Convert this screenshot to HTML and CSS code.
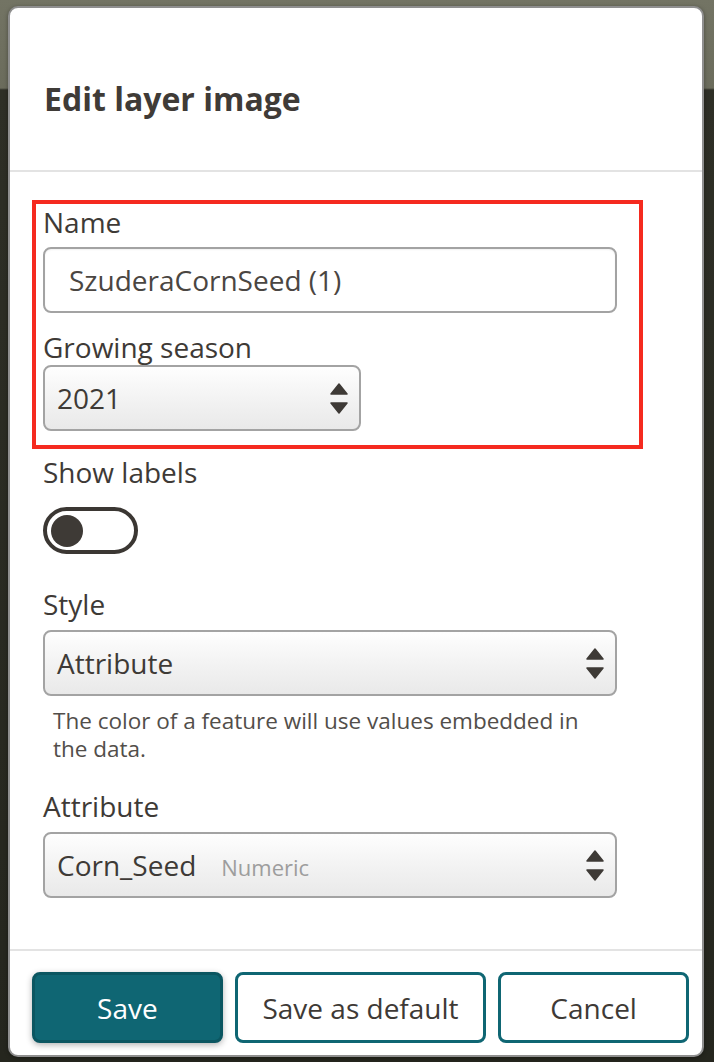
FILE: index.html
```html
<!DOCTYPE html>
<html lang="en">
<head>
<meta charset="utf-8">
<title>Edit layer image</title>
<link rel="stylesheet" href="styles.css">
</head>
<body>
<div class="backdrop">
  <div class="modal">
    <div class="modal-header">
      <h1 class="title">Edit layer image</h1>
    </div>
    <div class="modal-body">
      <div class="highlight">
        <label class="label">Name</label>
        <div class="text-input gap-sm">SzuderaCornSeed (1)</div>
        <label class="label gap-md">Growing season</label>
        <div class="select">
          <span class="select-value">2021</span>
          <svg class="arrows" width="18" height="31" viewBox="0 0 18 31"><polygon points="9,1 17,11 1,11"/><polygon points="1,20 17,20 9,30"/></svg>
        </div>
      </div>
      <label class="label gap-xs">Show labels</label>
      <div class="toggle"><span class="knob"></span></div>
      <label class="label gap-lg">Style</label>
      <div class="select gap-sm2">
        <span class="select-value">Attribute</span>
        <svg class="arrows" width="18" height="31" viewBox="0 0 18 31"><polygon points="9,1 17,11 1,11"/><polygon points="1,20 17,20 9,30"/></svg>
      </div>
      <p class="help">The color of a feature will use values embedded in the data.</p>
      <label class="label gap-help">Attribute</label>
      <div class="select gap-sm2">
        <span class="select-value">Corn_Seed<span class="type">Numeric</span></span>
        <svg class="arrows" width="18" height="31" viewBox="0 0 18 31"><polygon points="9,1 17,11 1,11"/><polygon points="1,20 17,20 9,30"/></svg>
      </div>
    </div>
    <div class="modal-footer">
      <button class="btn btn-primary">Save</button>
      <button class="btn btn-wide">Save as default</button>
      <button class="btn">Cancel</button>
    </div>
  </div>
</div>
</body>
</html>
```
FILE: styles.css
```css
* { box-sizing: border-box; }
html, body { margin: 0; padding: 0; }
body {
  width: 714px;
  height: 1062px;
  overflow: hidden;
  font-family: "Open Sans", "Noto Sans", sans-serif;
  color: #3e3a36;
  background: linear-gradient(to bottom, #737464 0, #6b6c5c 88px, #2e2f26 90px, #25261e 100%);
}
.backdrop {
  padding: 6px 10px 5px 8px;
}
.modal {
  width: 696px;
  height: 1051px;
  background: #fff;
  border: 2px solid #8f8f8f;
  border-radius: 10px;
  box-shadow: 0 1px 4px rgba(0,0,0,0.35);
  display: flex;
  flex-direction: column;
}
.modal-header {
  padding: 71px 20px 51px 34px;
  border-bottom: 2px solid #e3e3e3;
}
.title {
  margin: 0;
  font-size: 32px;
  line-height: 40px;
  font-weight: 700;
  color: #3f3b37;
}
.modal-body {
  padding: 28px 85px 50px 33px;
  display: flex;
  flex-direction: column;
  flex: 1;
}
.highlight {
  border: 4px solid #f52a1f;
  margin: 0 -26px 0 -11px;
  padding: 0 22px 14px 7px;
  display: flex;
  flex-direction: column;
}
.label {
  display: block;
  font-size: 28px;
  line-height: 36px;
  color: #3e3a36;
}
.gap-xs { margin-top: 5px; }
.gap-sm { margin-top: 7px; }
.gap-sm2 { margin-top: 8px; }
.gap-md { margin-top: 16px; }
.gap-lg { margin-top: 32px; }
.gap-help { margin-top: 25px; }
.text-input {
  height: 66px;
  border: 2px solid #a3a3a3;
  border-radius: 8px;
  background: #fff;
  padding: 0 22px 0 24px;
  display: flex;
  align-items: center;
  font-size: 28px;
  color: #4a4642;
  box-shadow: inset 0 1px 2px rgba(0,0,0,0.06);
}
.select {
  height: 66px;
  border: 2px solid #a3a3a3;
  border-radius: 8px;
  background: linear-gradient(to bottom, #fefefe 0%, #f3f3f3 50%, #e9e9e9 100%);
  padding: 0 11px 0 12px;
  display: flex;
  align-items: center;
  justify-content: space-between;
  font-size: 28px;
  color: #3e3a36;
}
.highlight .select { width: 318px; }
.select-value { display: flex; align-items: baseline; }
.type {
  font-size: 22px;
  color: #9d9d9d;
  margin-left: 25px;
}
.arrows { fill: #3e3a36; stroke: #3e3a36; stroke-width: 1.5; stroke-linejoin: round; flex: none; }
.toggle {
  margin-top: 17px;
  width: 95px;
  height: 47px;
  border: 4px solid #3b3733;
  border-radius: 24px;
  padding: 0 4px;
  display: flex;
  align-items: center;
}
.knob {
  width: 32px;
  height: 32px;
  border-radius: 50%;
  background: #3e3a36;
}
.help {
  margin: 11px 0 0;
  padding: 0 20px 0 10px;
  font-size: 22.5px;
  line-height: 28px;
  color: #524e4a;
}
.modal-footer {
  border-top: 2px solid #e3e3e3;
  padding: 21px 13px 12px 22px;
  display: flex;
  gap: 12px;
}
.btn {
  width: 191px;
  height: 71px;
  border: 3px solid #0f6673;
  border-radius: 8px;
  background: #fff;
  font-family: "Open Sans", "Noto Sans", sans-serif;
  font-size: 28px;
  color: #3e3a36;
  padding: 0;
}
.btn-wide { width: 252px; }
.btn-primary {
  background: #0f6673;
  border-color: #0b5661;
  color: #fff;
  box-shadow: 0 2px 6px rgba(0,0,0,0.3);
}
```
